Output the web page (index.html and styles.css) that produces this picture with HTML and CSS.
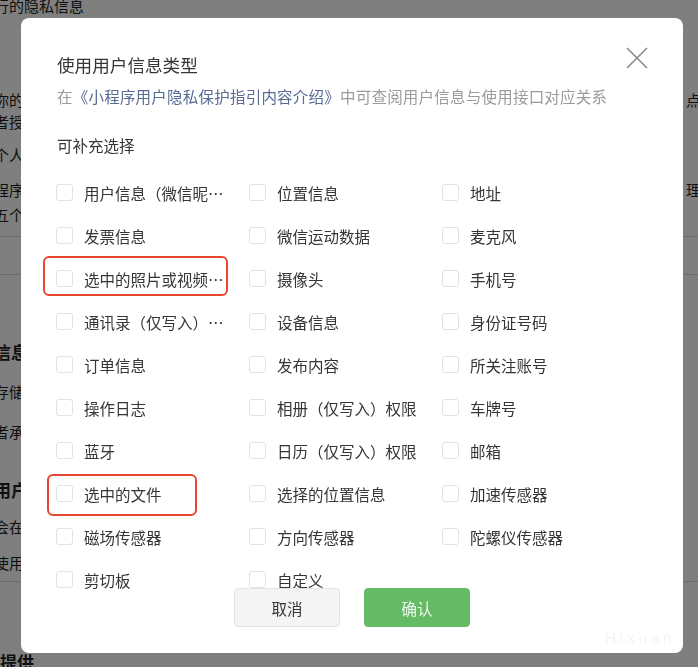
FILE: index.html
```html
<!DOCTYPE html>
<html lang="zh-CN">
<head>
<meta charset="utf-8">
<title>使用用户信息类型</title>
<link rel="stylesheet" href="styles.css">
</head>
<body>
<div class="page">
  <div class="bl r1"><span class="l">行的隐私信息</span></div>
  <div class="bl r2"><span class="l">你的</span><span class="r">点击</span></div>
  <div class="bl r3"><span class="l">者授</span></div>
  <div class="bl r4"><span class="l">个人</span></div>
  <div class="bl r5"><span class="l">程序</span><span class="r">理你</span></div>
  <div class="bl r6"><span class="l">五个</span></div>
  <div class="hr h1"></div>
  <div class="hr h2"></div>
  <div class="bl bold r7"><span class="l">信息</span></div>
  <div class="bl r8"><span class="l">存储</span></div>
  <div class="bl r9"><span class="l">者承</span><span class="r">间</span></div>
  <div class="bl bold r10"><span class="l">用户</span></div>
  <div class="bl r11"><span class="l">会在</span></div>
  <div class="bl r12"><span class="l">使用</span></div>
  <div class="hr h3"></div>
  <div class="bl bold r13"><span class="l2">提供</span></div>
</div>

<div class="mask"></div>

<div class="modal">
  <div class="header">
    <h1 class="title">使用用户信息类型</h1>
    <button class="close" aria-label="关闭">
      <svg width="22" height="22" viewBox="0 0 22 22"><path d="M1 1 L21 21 M21 1 L1 21" stroke="#8a8a8a" stroke-width="1.6" fill="none"/></svg>
    </button>
  </div>
  <p class="desc">在<a class="link">《小程序用户隐私保护指引内容介绍》</a>中可查阅用户信息与使用接口对应关系</p>
  <p class="sub">可补充选择</p>

  <div class="grid">
    <label class="item"><span class="box"></span><span class="txt">用户信息（微信昵称、头像）</span></label>
    <label class="item"><span class="box"></span><span class="txt">位置信息</span></label>
    <label class="item"><span class="box"></span><span class="txt">地址</span></label>

    <label class="item"><span class="box"></span><span class="txt">发票信息</span></label>
    <label class="item"><span class="box"></span><span class="txt">微信运动数据</span></label>
    <label class="item"><span class="box"></span><span class="txt">麦克风</span></label>

    <label class="item"><span class="box"></span><span class="txt">选中的照片或视频信息</span></label>
    <label class="item"><span class="box"></span><span class="txt">摄像头</span></label>
    <label class="item"><span class="box"></span><span class="txt">手机号</span></label>

    <label class="item"><span class="box"></span><span class="txt">通讯录（仅写入）权限</span></label>
    <label class="item"><span class="box"></span><span class="txt">设备信息</span></label>
    <label class="item"><span class="box"></span><span class="txt">身份证号码</span></label>

    <label class="item"><span class="box"></span><span class="txt">订单信息</span></label>
    <label class="item"><span class="box"></span><span class="txt">发布内容</span></label>
    <label class="item"><span class="box"></span><span class="txt">所关注账号</span></label>

    <label class="item"><span class="box"></span><span class="txt">操作日志</span></label>
    <label class="item"><span class="box"></span><span class="txt">相册（仅写入）权限</span></label>
    <label class="item"><span class="box"></span><span class="txt">车牌号</span></label>

    <label class="item"><span class="box"></span><span class="txt">蓝牙</span></label>
    <label class="item"><span class="box"></span><span class="txt">日历（仅写入）权限</span></label>
    <label class="item"><span class="box"></span><span class="txt">邮箱</span></label>

    <label class="item"><span class="box"></span><span class="txt">选中的文件</span></label>
    <label class="item"><span class="box"></span><span class="txt">选择的位置信息</span></label>
    <label class="item"><span class="box"></span><span class="txt">加速传感器</span></label>

    <label class="item"><span class="box"></span><span class="txt">磁场传感器</span></label>
    <label class="item"><span class="box"></span><span class="txt">方向传感器</span></label>
    <label class="item"><span class="box"></span><span class="txt">陀螺仪传感器</span></label>

    <label class="item"><span class="box"></span><span class="txt">剪切板</span></label>
    <label class="item"><span class="box"></span><span class="txt">自定义</span></label>
  </div>

  <div class="footer">
    <button class="btn btn-cancel">取消</button>
    <button class="btn btn-ok">确认</button>
  </div>

  <div class="mark mark-1"></div>
  <div class="mark mark-2"></div>
  <div class="watermark">Hixuan</div>
</div>
</body>
</html>
```

FILE: styles.css
```css
* { box-sizing: border-box; }
html, body {
  margin: 0;
  padding: 0;
  width: 698px;
  height: 667px;
  overflow: hidden;
  background: #fff;
  font-family: "Noto Sans CJK SC", "Noto Sans", sans-serif;
}

/* background page */
.page {
  width: 698px;
  height: 667px;
  overflow: hidden;
  color: #1e1e1e;
  font-size: 15px;
}
.bl {
  height: 20px;
  line-height: 20px;
  display: flex;
  justify-content: space-between;
  white-space: nowrap;
}
.bl .l { margin-left: -6px; }
.bl .l2 { margin-left: 0; }
.bl .r { margin-right: -18px; }
.bold { font-weight: 700; font-size: 17px; }
.r1 { margin-top: -4px; }
.r2 { margin-top: 74px; }
.r3 { margin-top: 2px; }
.r4 { margin-top: 13px; }
.r5 { margin-top: 15px; }
.r6 { margin-top: 5px; }
.hr { height: 1px; background: #d8d8d8; }
.h1 { margin-top: 11px; }
.h2 { margin-top: 37px; }
.r7 { margin-top: 67px; }
.r8 { margin-top: 20px; }
.r9 { margin-top: 20px; }
.r10 { margin-top: 38px; }
.r11 { margin-top: 17px; }
.r12 { margin-top: 16px; }
.h3 { margin-top: 8px; }
.r13 { margin-top: 70px; }

.mask {
  position: fixed;
  inset: 0;
  background: rgba(0, 0, 0, 0.5);
}

/* modal */
.modal {
  position: fixed;
  left: 21px;
  top: 18px;
  width: 662px;
  height: 635px;
  background: #fff;
  border-radius: 8px;
  padding: 0 36px;
  overflow: hidden;
  color: #353535;
}
.header {
  display: flex;
  justify-content: space-between;
  align-items: flex-start;
  padding-top: 35px;
}
.title {
  margin: 0;
  font-size: 17.6px;
  font-weight: 400;
  line-height: 24px;
  color: #353535;
}
.close {
  margin: -6px -1px 0 0;
  padding: 0;
  border: 0;
  background: none;
  width: 22px;
  height: 22px;
  display: block;
}
.close svg { display: block; }
.desc {
  margin: 8px 0 0;
  font-size: 15.5px;
  letter-spacing: 0.22px;
  line-height: 22px;
  color: #9b9b9b;
  white-space: nowrap;
}
.link { color: #576b95; }
.sub {
  margin: 27px 0 0;
  font-size: 15.5px;
  line-height: 22px;
  color: #353535;
}

.grid {
  margin-top: 15px;
  margin-left: -1px;
  display: grid;
  grid-template-columns: 193px 193px 193px;
  grid-auto-rows: 43px;
}
.item {
  display: flex;
  align-items: center;
  gap: 11px;
  font-size: 15.5px;
  color: #353535;
}
.box {
  flex: none;
  width: 17px;
  height: 17px;
  border: 1px solid #e2e2e2;
  border-radius: 3px;
  background: #fff;
}
.txt {
  max-width: 141px;
  white-space: nowrap;
  overflow: hidden;
  text-overflow: ellipsis;
  line-height: 22px;
}

.footer {
  position: relative;
  margin-top: -13px;
  display: flex;
  justify-content: center;
  gap: 24px;
}
.btn {
  width: 106px;
  height: 39px;
  border-radius: 4px;
  font-family: "Noto Sans CJK SC", "Noto Sans", sans-serif;
  font-size: 15.5px;
  cursor: pointer;
}
.btn-cancel {
  background: #f4f4f4;
  border: 1px solid #e4e4e4;
  color: #353535;
}
.btn-ok {
  background: #65bb65;
  border: 1px solid #65bb65;
  color: #eef8ee;
}

.mark {
  position: absolute;
  border: 2px solid #e8472f;
  border-radius: 6px;
}
.mark-1 { left: 22px; top: 238px; width: 185px; height: 40px; }
.mark-2 { left: 26px; top: 456px; width: 150px; height: 42px; }

.watermark {
  position: absolute;
  left: 584px;
  top: 611px;
  font-family: "Liberation Sans", sans-serif;
  font-size: 15px;
  line-height: 18px;
  letter-spacing: 4px;
  color: #f4f4f4;
}
```
